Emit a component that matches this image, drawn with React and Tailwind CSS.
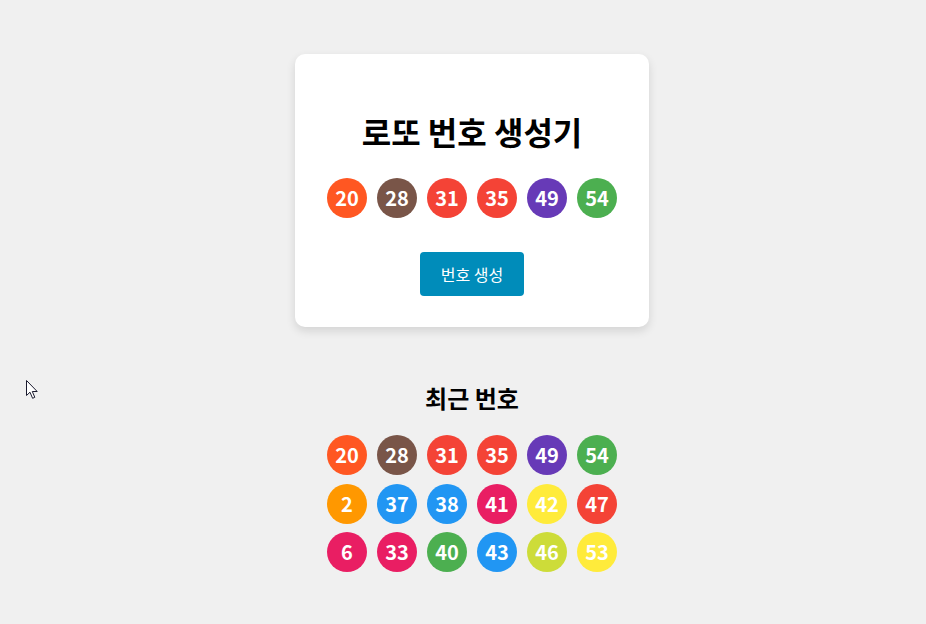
import React from "react";

const COLORS = {
  orange: "bg-[#ff9800]",
  deep: "bg-[#ff5722]",
  brown: "bg-[#795548]",
  red: "bg-[#f44336]",
  purple: "bg-[#673ab7]",
  green: "bg-[#4caf50]",
  blue: "bg-[#2196f3]",
  pink: "bg-[#e91e63]",
  yellow: "bg-[#ffeb3b]",
  lime: "bg-[#cddc39]",
};

const current = [
  [20, "deep"],
  [28, "brown"],
  [31, "red"],
  [35, "red"],
  [49, "purple"],
  [54, "green"],
];

const recent = [
  ...current,
  [2, "orange"],
  [37, "blue"],
  [38, "blue"],
  [41, "pink"],
  [42, "yellow"],
  [47, "red"],
  [6, "pink"],
  [33, "pink"],
  [40, "green"],
  [43, "blue"],
  [46, "lime"],
  [53, "yellow"],
];

function Ball({ n, c }) {
  return (
    <div
      className={`w-10 h-10 rounded-full flex items-center justify-center text-white font-bold text-[20px] leading-none ${COLORS[c]}`}
    >
      {n}
    </div>
  );
}

export default function App() {
  return (
    <div
      className="min-h-[624px] w-full bg-[#f0f0f0] relative"
      style={{ fontFamily: '"Noto Sans CJK KR", "Noto Sans", sans-serif' }}
    >
      <div className="flex flex-col items-center pl-[18px] pt-[54px]">
        <div className="w-[354px] bg-white rounded-[10px] shadow-[0_4px_10px_rgba(0,0,0,0.12)] flex flex-col items-center pt-[54px] pb-[31px]">
          <h1 className="text-[32px] leading-[46px] font-bold text-black">로또 번호 생성기</h1>
          <div className="flex gap-[10px] mt-[24px]">
            {current.map(([n, c], i) => (
              <Ball key={i} n={n} c={c} />
            ))}
          </div>
          <button className="mt-[34px] w-[104px] h-[44px] bg-[#008cba] text-white text-[16px] rounded-[4px]">
            번호 생성
          </button>
        </div>
        <h2 className="mt-[53px] text-[24px] leading-[35px] font-bold text-black">최근 번호</h2>
        <div className="mt-[20px] grid grid-cols-6 gap-x-[10px] gap-y-[8.5px]">
          {recent.map(([n, c], i) => (
            <Ball key={i} n={n} c={c} />
          ))}
        </div>
      </div>
      <svg
        className="absolute left-[26px] top-[380px]"
        width="13"
        height="20"
        viewBox="0 0 13 20"
      >
        <path
          d="M0.5 0.5 L0.5 15.5 L4 12.2 L6.6 18.3 L8.8 17.3 L6.3 11.5 L11.2 11.5 Z"
          fill="white"
          stroke="#1a1a2e"
          strokeWidth="1"
          strokeLinejoin="round"
        />
      </svg>
    </div>
  );
}
